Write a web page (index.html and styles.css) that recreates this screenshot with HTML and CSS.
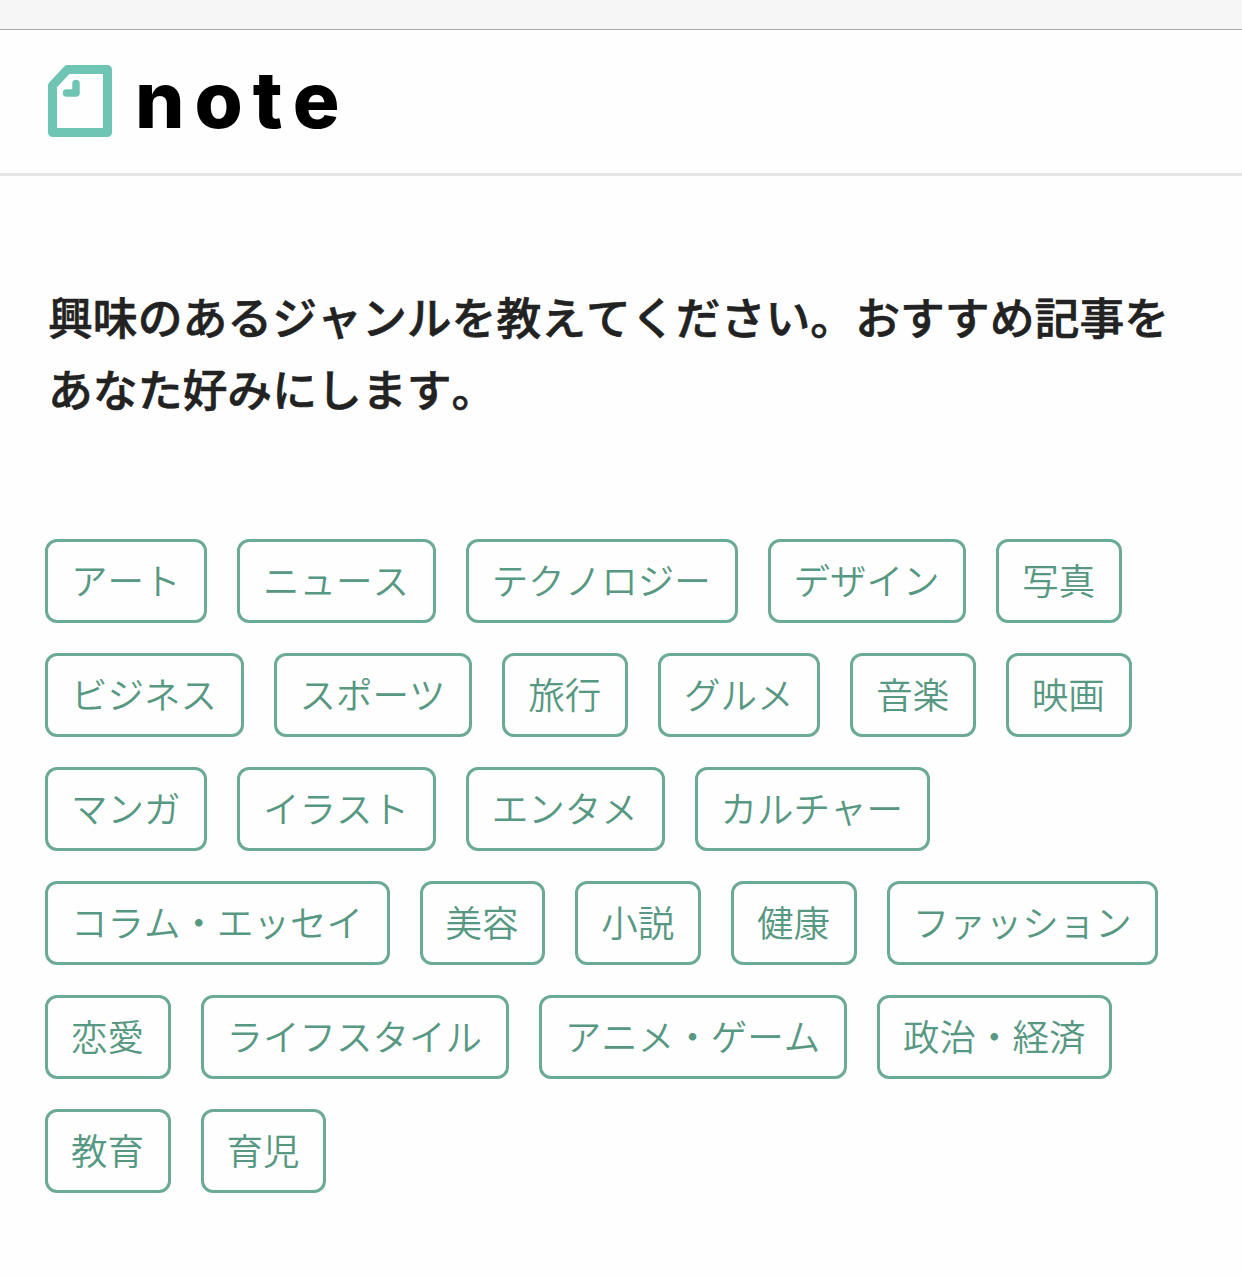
FILE: index.html
```html
<!DOCTYPE html>
<html lang="ja">
  <head>
    <meta charset="UTF-8" />
    <meta name="viewport" content="width=device-width, initial-scale=1.0" />
    <title>note</title>
    <link rel="stylesheet" href="styles.css">
  </head>
  <body>
    <div class="top-bar"></div>
    <header class="header">
      <svg class="logo" width="64" height="72" viewBox="0 0 64 72">
        <path class="logo-paper" d="M4.5 20.5 L19.5 4.5 H59.5 V67.5 H4.5 Z" />
        <path class="logo-fold" d="M28 18.5 V28 H18.5" />
      </svg>
      <span class="logo-text">note</span>
    </header>

    <main class="container">
      <h1 class="title">興味のあるジャンルを教えてください。おすすめ記事をあなた好みにします。</h1>

      <div class="tags">
        <button class="tag">アート</button>
        <button class="tag">ニュース</button>
        <button class="tag">テクノロジー</button>
        <button class="tag">デザイン</button>
        <button class="tag">写真</button>
        <button class="tag">ビジネス</button>
        <button class="tag">スポーツ</button>
        <button class="tag">旅行</button>
        <button class="tag">グルメ</button>
        <button class="tag">音楽</button>
        <button class="tag">映画</button>
        <button class="tag">マンガ</button>
        <button class="tag">イラスト</button>
        <button class="tag">エンタメ</button>
        <button class="tag">カルチャー</button>
        <button class="tag">コラム・エッセイ</button>
        <button class="tag">美容</button>
        <button class="tag">小説</button>
        <button class="tag">健康</button>
        <button class="tag">ファッション</button>
        <button class="tag">恋愛</button>
        <button class="tag">ライフスタイル</button>
        <button class="tag">アニメ・ゲーム</button>
        <button class="tag">政治・経済</button>
        <button class="tag">教育</button>
        <button class="tag">育児</button>
      </div>
    </main>
  </body>
</html>
```
FILE: styles.css
```css
body {
  font-family: "Noto Sans CJK JP", sans-serif;
  font-kerning: none;
  background-color: #fefefe;
  color: #222;
  margin: 0;
}

.top-bar {
  height: 29px;
  background-color: #f6f6f6;
  border-bottom: 1px solid #aaa;
}

.header {
  display: flex;
  align-items: center;
  height: 146px;
  padding: 0 48px 1px;
  box-sizing: border-box;
  border-bottom: 3px solid #e5e5e5;
}

.logo-paper {
  fill: none;
  stroke: #6fc5b3;
  stroke-width: 9;
  stroke-linejoin: round;
}

.logo-fold {
  fill: none;
  stroke: #6fc5b3;
  stroke-width: 7.5;
  stroke-linecap: round;
  stroke-linejoin: round;
}

.logo-text {
  margin: 0 0 3px 23px;
  font-family: "Inter", sans-serif;
  font-size: 78px;
  font-weight: 800;
  line-height: 100px;
  letter-spacing: 10px;
  color: #000;
}

.container {
  padding: 104px 45px 0;
}

.title {
  width: 1125px;
  margin: 0 0 115px 3px;
  font-size: 44.85px;
  font-weight: 500;
  line-height: 72px;
  -webkit-text-stroke: 0.6px #222;
}

.tags {
  display: flex;
  flex-wrap: wrap;
  gap: 30px;
  width: 1130px;
}

.tag {
  height: 84px;
  padding: 0 23.8px 4px 22.9px;
  border: 3px solid #6aaa97;
  border-radius: 12px;
  background: none;
  color: #579882;
  font-family: inherit;
  font-kerning: none;
  font-size: 36.5px;
  font-weight: 350;
  cursor: pointer;
}
```
